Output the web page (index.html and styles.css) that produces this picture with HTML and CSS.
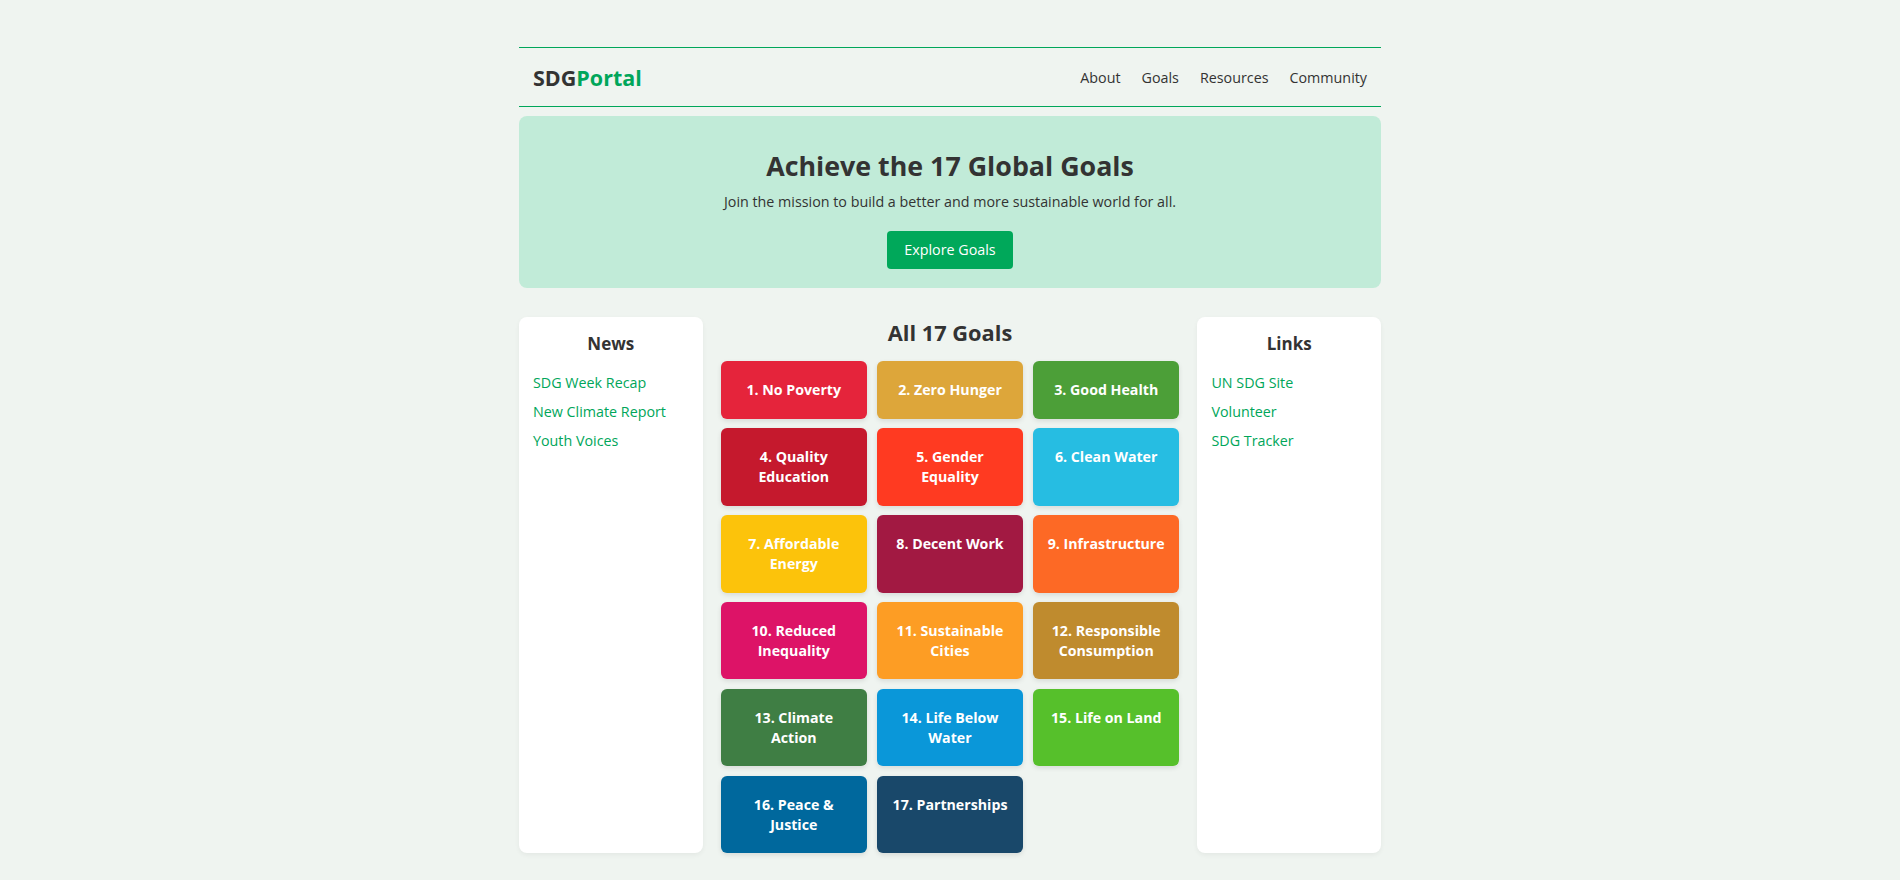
FILE: index.html
```html
<!DOCTYPE html>
<html lang="en">
<head>
<meta charset="utf-8">
<title>SDGPortal</title>
<link rel="stylesheet" href="styles.css">
</head>
<body>
<div class="page">
  <header class="site-header">
    <div class="logo">SDG<span class="logo-accent">Portal</span></div>
    <nav class="nav">
      <a href="#">About</a>
      <a href="#">Goals</a>
      <a href="#">Resources</a>
      <a href="#">Community</a>
    </nav>
  </header>

  <section class="hero">
    <h1 class="hero-title">Achieve the 17 Global Goals</h1>
    <p class="hero-text">Join the mission to build a better and more sustainable world for all.</p>
    <a class="btn" href="#">Explore Goals</a>
  </section>

  <main class="layout">
    <aside class="card">
      <h3 class="card-title">News</h3>
      <ul class="link-list">
        <li><a href="#">SDG Week Recap</a></li>
        <li><a href="#">New Climate Report</a></li>
        <li><a href="#">Youth Voices</a></li>
      </ul>
    </aside>

    <section class="goals">
      <h2 class="goals-title">All 17 Goals</h2>
      <div class="goal-grid">
        <div class="goal g1">1. No Poverty</div>
        <div class="goal g2">2. Zero Hunger</div>
        <div class="goal g3">3. Good Health</div>
        <div class="goal g4">4. Quality Education</div>
        <div class="goal g5">5. Gender Equality</div>
        <div class="goal g6">6. Clean Water</div>
        <div class="goal g7">7. Affordable Energy</div>
        <div class="goal g8">8. Decent Work</div>
        <div class="goal g9">9. Infrastructure</div>
        <div class="goal g10">10. Reduced Inequality</div>
        <div class="goal g11">11. Sustainable Cities</div>
        <div class="goal g12">12. Responsible Consumption</div>
        <div class="goal g13">13. Climate Action</div>
        <div class="goal g14">14. Life Below Water</div>
        <div class="goal g15">15. Life on Land</div>
        <div class="goal g16">16. Peace &amp; Justice</div>
        <div class="goal g17">17. Partnerships</div>
      </div>
    </section>

    <aside class="card">
      <h3 class="card-title">Links</h3>
      <ul class="link-list">
        <li><a href="#">UN SDG Site</a></li>
        <li><a href="#">Volunteer</a></li>
        <li><a href="#">SDG Tracker</a></li>
      </ul>
    </aside>
  </main>
</div>
</body>
</html>
```
FILE: styles.css
```css
* { box-sizing: border-box; }

body {
  margin: 0;
  background: #eff4f0;
  color: #333;
  font-family: "Open Sans", "Noto Sans", sans-serif;
  font-size: 14.3px;
  line-height: 1.5;
}

a { text-decoration: none; }

.page {
  width: 862px;
  margin: 0 auto;
  padding: 47px 0 20px;
}

/* header */
.site-header {
  display: flex;
  align-items: center;
  justify-content: space-between;
  height: 60px;
  padding: 0 14px;
  border-top: 1px solid #00a65a;
  border-bottom: 1px solid #00a65a;
}

.logo {
  font-size: 21.5px;
  font-weight: 700;
  color: #333;
  line-height: 1.2;
  margin-top: 2px;
}

.logo-accent { color: #00a65a; }

.nav {
  display: flex;
  gap: 21px;
  margin-top: 2px;
}

.nav a {
  color: #333;
  font-size: 14.3px;
}

/* hero */
.hero {
  margin-top: 9px;
  background: #c1ebd8;
  border-radius: 8px;
  padding: 33.5px 20px 18.8px;
  text-align: center;
}

.hero-title {
  margin: 0;
  font-size: 26.8px;
  line-height: 1.2;
  font-weight: 700;
  color: #333;
}

.hero-text {
  margin: 9px 0 0;
  font-size: 14.3px;
  color: #333;
}

.btn {
  display: inline-block;
  margin-top: 19px;
  padding: 9px 17.5px;
  line-height: 20px;
  background: #00a85a;
  color: #fff;
  border-radius: 4px;
  font-size: 14.3px;
}

/* main layout */
.layout {
  display: grid;
  grid-template-columns: 1fr 2.5fr 1fr;
  gap: 18px;
  margin-top: 29.3px;
}

.card {
  background: #fff;
  border-radius: 8px;
  padding: 16px 14px;
  box-shadow: 0 2px 5px rgba(0, 0, 0, 0.05);
}

.card-title {
  margin: 0 0 16.3px;
  text-align: center;
  font-size: 17px;
  line-height: 1.3;
  font-weight: 700;
  color: #333;
}

.link-list {
  list-style: none;
  margin: 0;
  padding: 0;
}

.link-list li {
  margin-bottom: 8px;
}

.link-list a {
  color: #00a65a;
}

/* goals */
.goals-title {
  margin: 3px 0 15px;
  text-align: center;
  font-size: 21.8px;
  line-height: 1.2;
  font-weight: 700;
  color: #333;
}

.goal-grid {
  display: grid;
  grid-template-columns: repeat(3, 1fr);
  gap: 9.8px;
}

.goal {
  padding: 18.6px 14px 18.6px;
  border-radius: 6px;
  color: #fff;
  font-weight: 700;
  font-size: 14.2px;
  line-height: 20px;
  text-align: center;
  box-shadow: 0 2px 5px rgba(0, 0, 0, 0.1);
}

.g1 { background: #e5243b; }
.g2 { background: #dda63a; }
.g3 { background: #4c9f38; }
.g4 { background: #c5192d; }
.g5 { background: #ff3a21; }
.g6 { background: #26bde2; }
.g7 { background: #fcc30b; }
.g8 { background: #a21942; }
.g9 { background: #fd6925; }
.g10 { background: #dd1367; }
.g11 { background: #fd9d24; }
.g12 { background: #bf8b2e; }
.g13 { background: #3f7e44; }
.g14 { background: #0a97d9; }
.g15 { background: #56c02b; }
.g16 { background: #00689d; }
.g17 { background: #19486a; }
```
